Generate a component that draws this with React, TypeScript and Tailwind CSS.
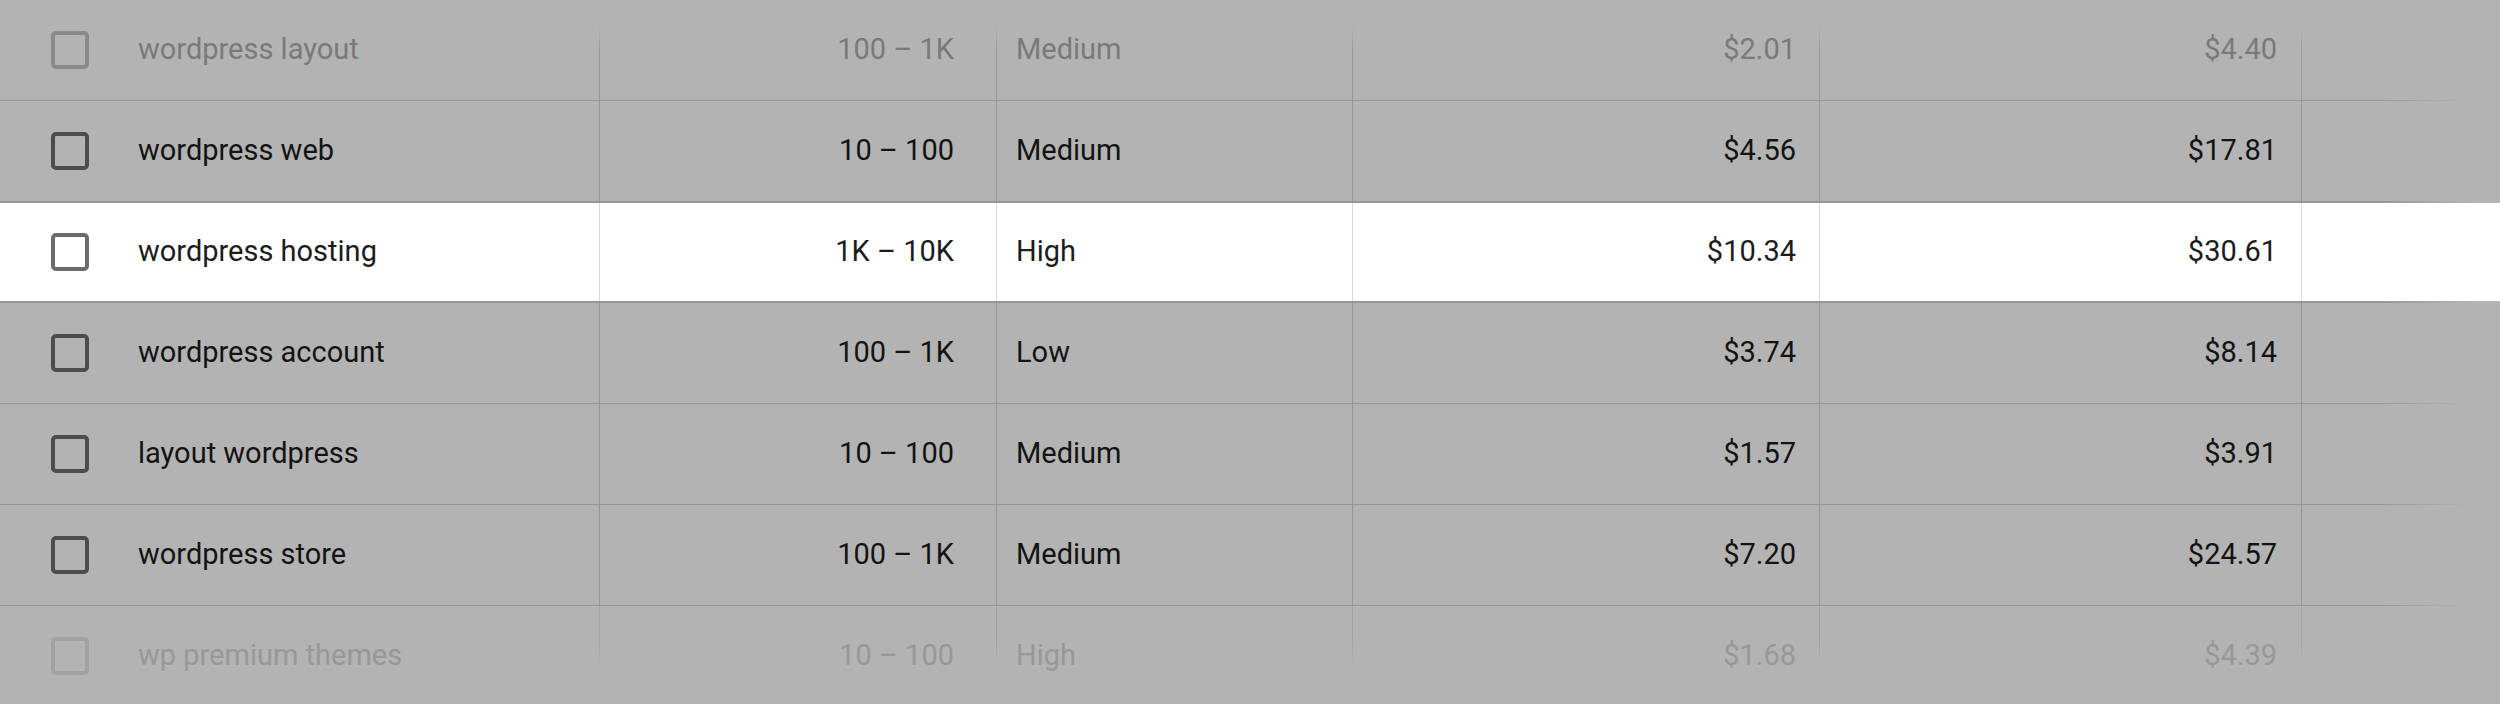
import React from "react";

type Row = {
  keyword: string;
  volume: string;
  competition: string;
  low: string;
  high: string;
  tone: "top" | "gray" | "white" | "bottom";
};

const rows: Row[] = [
  { keyword: "wordpress layout", volume: "100 – 1K", competition: "Medium", low: "$2.01", high: "$4.40", tone: "top" },
  { keyword: "wordpress web", volume: "10 – 100", competition: "Medium", low: "$4.56", high: "$17.81", tone: "gray" },
  { keyword: "wordpress hosting", volume: "1K – 10K", competition: "High", low: "$10.34", high: "$30.61", tone: "white" },
  { keyword: "wordpress account", volume: "100 – 1K", competition: "Low", low: "$3.74", high: "$8.14", tone: "gray" },
  { keyword: "layout wordpress", volume: "10 – 100", competition: "Medium", low: "$1.57", high: "$3.91", tone: "gray" },
  { keyword: "wordpress store", volume: "100 – 1K", competition: "Medium", low: "$7.20", high: "$24.57", tone: "gray" },
  { keyword: "wp premium themes", volume: "10 – 100", competition: "High", low: "$1.68", high: "$4.39", tone: "bottom" },
];

const textTone = {
  top: "text-[#7a7a7a]",
  gray: "text-[#131313]",
  white: "text-[#1c1c1c]",
  bottom: "text-[#989898]",
};

const boxTone = {
  top: "border-[#8a8a8a]",
  gray: "border-[#4c4c4c]",
  white: "border-[#6c6c6c]",
  bottom: "border-[#a2a2a2]",
};

function Divider({ tone }: { tone: Row["tone"] }) {
  if (tone === "top") {
    return <div className="w-px self-stretch mt-[26px] bg-gradient-to-b from-transparent to-[#9a9a9a] to-30%" />;
  }
  if (tone === "bottom") {
    return <div className="w-px self-stretch mb-[42px] bg-gradient-to-t from-transparent to-[#a3a3a3] to-30%" />;
  }
  return (
    <div
      className={`w-px self-stretch ${tone === "white" ? "bg-[#d8d8d8]" : "bg-[#969696]"}`}
    />
  );
}

function Separator({ thick }: { thick: boolean }) {
  return (
    <div
      className={`${thick ? "h-[2px]" : "h-px"} w-full bg-[linear-gradient(to_right,#979797_2380px,transparent_2470px)]`}
    />
  );
}

function KeywordRow({ row }: { row: Row }) {
  const h = row.tone === "white" ? "h-[98px]" : "h-[100px]";
  return (
    <div className={`flex ${h} ${row.tone === "white" ? "bg-white" : ""} ${textTone[row.tone]}`}>
      <div className="w-[599px] flex items-center">
        <div className={`ml-[51px] w-[38px] h-[38px] rounded-[5px] border-[4px] ${boxTone[row.tone]}`} />
        <span className="ml-[49px]">{row.keyword}</span>
      </div>
      <Divider tone={row.tone} />
      <div className="w-[396px] flex items-center justify-end pr-[42px]">{row.volume}</div>
      <Divider tone={row.tone} />
      <div className="w-[355px] flex items-center pl-[19px]">{row.competition}</div>
      <Divider tone={row.tone} />
      <div className="w-[466px] flex items-center justify-end pr-[23px]">{row.low}</div>
      <Divider tone={row.tone} />
      <div className="w-[481px] flex items-center justify-end pr-[24px]">{row.high}</div>
      <Divider tone={row.tone} />
      <div className="flex-1" />
    </div>
  );
}

export default function App() {
  return (
    <div className="w-[2500px] h-[704px] overflow-hidden bg-[#b3b3b3] font-['Roboto',sans-serif] text-[29px]">
      {rows.map((row, i) => (
        <div key={row.keyword}>
          <KeywordRow row={row} />
          {i < rows.length - 1 && (
            <Separator thick={row.tone === "white" || rows[i + 1].tone === "white"} />
          )}
        </div>
      ))}
    </div>
  );
}
